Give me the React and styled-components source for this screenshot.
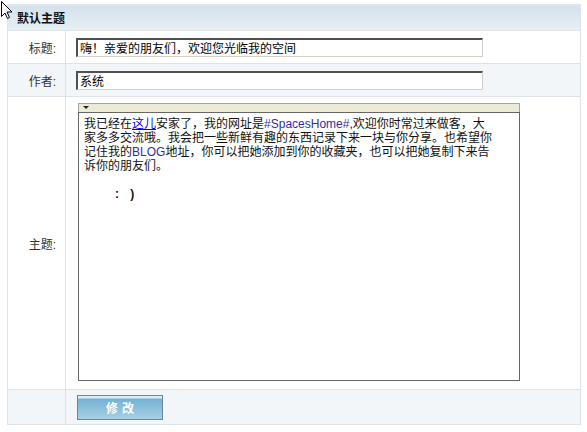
import React from "react";
import styled, { createGlobalStyle } from "styled-components";

const GlobalStyle = createGlobalStyle`
  body {
    margin: 0;
    background: #fff;
    font-family: "Liberation Sans", "Noto Sans CJK SC", sans-serif;
    font-size: 12px;
    color: #000;
  }
`;

const Page = styled.div`
  position: relative;
  padding: 4px 0 0 7px;
`;

const Cursor = styled.svg`
  position: absolute;
  left: 0;
  top: 0;
`;

const FormTable = styled.table`
  width: 574px;
  border-collapse: collapse;
  border: 1px solid #dde3e8;
`;

const HeadCell = styled.th`
  height: 25px;
  padding: 0 0 0 9px;
  text-align: left;
  font-size: 12px;
  font-weight: bold;
  color: #111;
  background: linear-gradient(#d4e1eb, #e8eff5);
  border-bottom: 1px solid #dde3e8;
`;

const Row = styled.tr`
  background: ${(p) => (p.$alt ? "#f2f6f8" : "#fff")};
`;

const Label = styled.td`
  width: 48px;
  height: ${(p) => p.$h}px;
  padding: 0 9px 0 0;
  text-align: right;
  vertical-align: middle;
  color: #333;
  border: 1px solid #dde3e8;
`;

const Field = styled.td`
  padding: 0 0 0 10px;
  vertical-align: middle;
  border: 1px solid #dde3e8;
`;

const TextInput = styled.input`
  box-sizing: border-box;
  display: block;
  width: 407px;
  height: 19px;
  margin: 0;
  padding: 0 2px;
  font-family: "Liberation Sans", "Noto Sans CJK SC", sans-serif;
  font-size: 12px;
  color: #000;
  background: #fff;
  border-style: solid;
  border-color: #505050 #d4d0c8 #d4d0c8 #505050;
  border-width: 2px 1px 1px 2px;
  outline: none;
`;

const Editor = styled.div`
  width: 442px;
  margin: 6px 0 8px 2px;
`;

const EditorBar = styled.div`
  box-sizing: border-box;
  height: 9px;
  background: #ecebd8;
  border: 1px solid #a4a49a;
  border-bottom: none;
  padding: 2px 0 0 4px;
  display: flex;
`;

const EditorBody = styled.div`
  box-sizing: border-box;
  height: 269px;
  padding: 4px 24px 4px 5px;
  border: 1px solid #666;
  background: #fff;
  font-size: 12px;
  line-height: 14px;
  color: #111;
`;

const Link = styled.a`
  color: #0000ee;
  text-decoration: underline;
`;

const Mark = styled.span`
  color: #2f2f98;
`;

const Smile = styled.p`
  margin: 14px 0 0 31px;
  font-weight: bold;
  letter-spacing: 4px;
`;

const Para = styled.p`
  margin: 0;
`;

const SubmitButton = styled.button`
  box-sizing: border-box;
  width: 86px;
  height: 25px;
  margin: 0 0 0 1px;
  padding: 0;
  border: 1px solid #6b8797;
  background: linear-gradient(#dcecf5 0, #dcecf5 2px, #74b1d3 3px, #a8cfe4 100%);
  color: #fff;
  font-family: "Liberation Sans", "Noto Sans CJK SC", sans-serif;
  font-size: 12px;
  font-weight: bold;
  letter-spacing: 4px;
  text-indent: 4px;
  cursor: pointer;
`;

export default function App() {
  return (
    <>
      <GlobalStyle />
      <Page>
        <FormTable>
          <thead>
            <tr>
              <HeadCell colSpan={2}>默认主题</HeadCell>
            </tr>
          </thead>
          <tbody>
            <Row>
              <Label $h={32}>标题:</Label>
              <Field>
                <TextInput defaultValue="嗨！亲爱的朋友们，欢迎您光临我的空间" />
              </Field>
            </Row>
            <Row $alt>
              <Label $h={32}>作者:</Label>
              <Field>
                <TextInput defaultValue="系统" />
              </Field>
            </Row>
            <Row>
              <Label $h={292}>主题:</Label>
              <Field>
                <Editor>
                  <EditorBar>
                    <svg width="6" height="4" viewBox="0 0 6 4">
                      <path d="M0 0H6L3 3Z" fill="#222" />
                    </svg>
                  </EditorBar>
                  <EditorBody>
                    <Para>
                      我已经在<Link href="#">这儿</Link>安家了，我的网址是
                      <Mark>#SpacesHome#</Mark>,欢迎你时常过来做客，大家多多交流哦。我会把一些新鲜有趣的东西记录下来一块与你分享。也希望你记住我的
                      <Mark>BLOG</Mark>地址，你可以把她添加到你的收藏夹，也可以把她复制下来告诉你的朋友们。
                    </Para>
                    <Smile>: )</Smile>
                  </EditorBody>
                </Editor>
              </Field>
            </Row>
            <Row $alt>
              <Label $h={34}></Label>
              <Field>
                <SubmitButton type="button">修改</SubmitButton>
              </Field>
            </Row>
          </tbody>
        </FormTable>
        <Cursor width="13" height="20" viewBox="0 0 13 20">
          <path
            d="M1.5 1.5V16.5L5 13L7.5 18.5L9.5 17.5L7 12H12Z"
            fill="#fff"
            stroke="#000"
            strokeWidth="1"
            strokeLinejoin="miter"
          />
        </Cursor>
      </Page>
    </>
  );
}
